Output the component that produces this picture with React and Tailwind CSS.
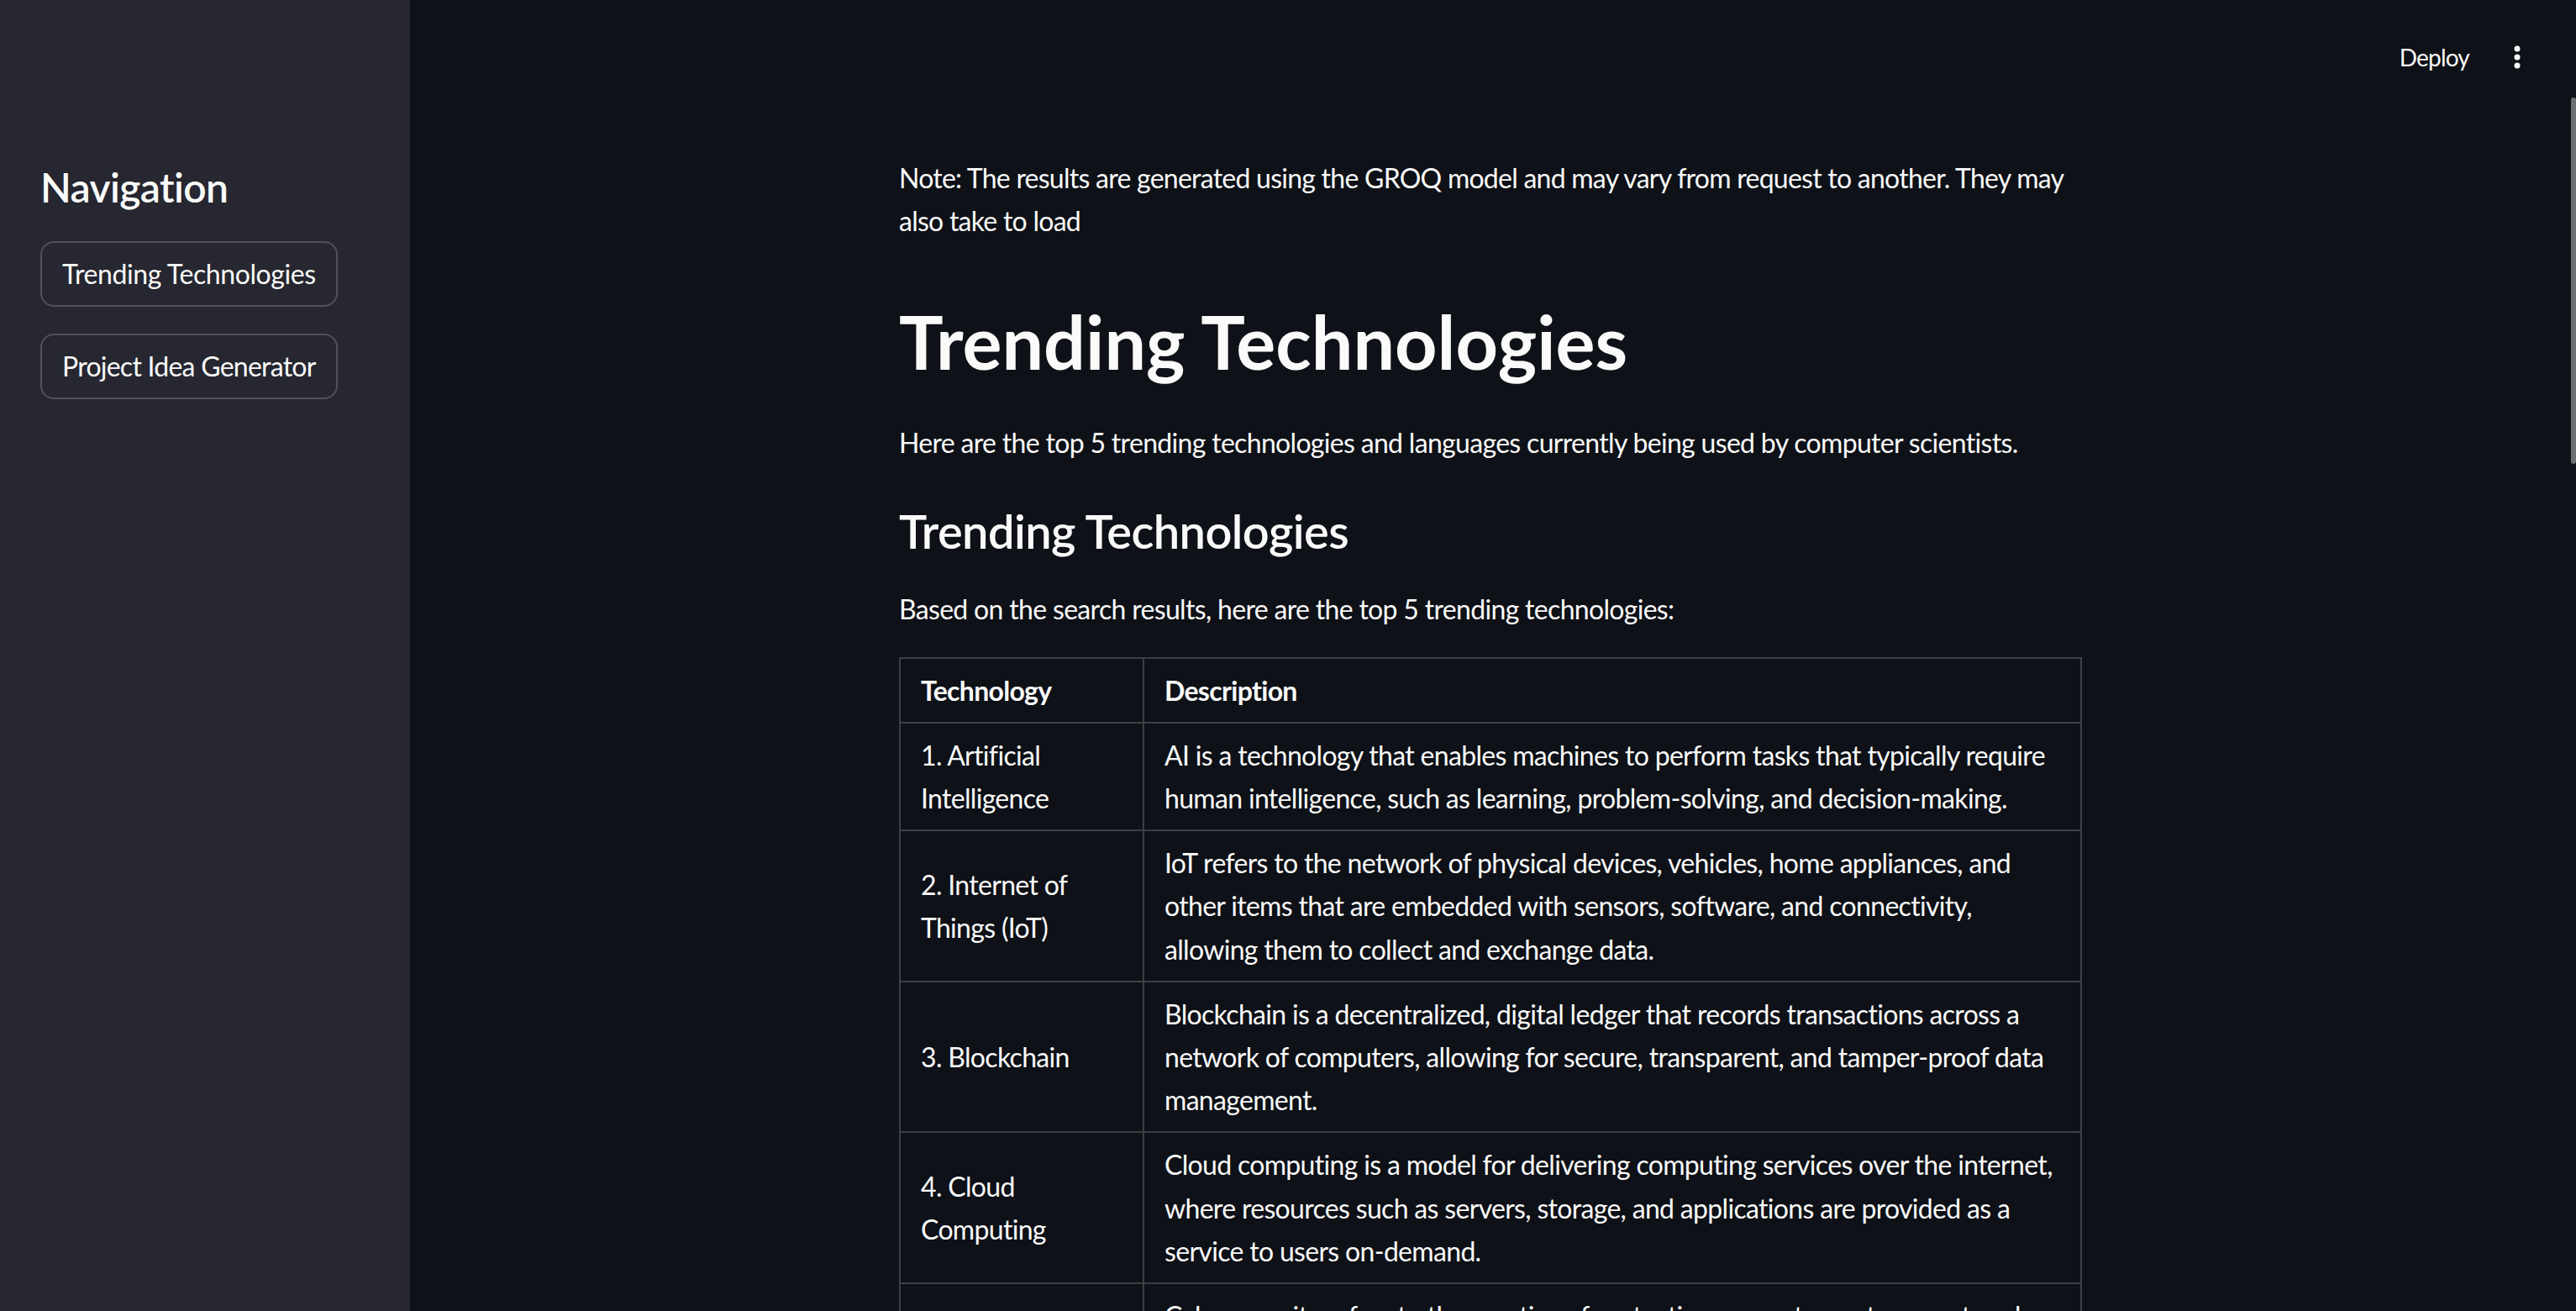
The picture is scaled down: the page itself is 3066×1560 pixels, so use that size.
import React from 'react';

const rows = [
	{
		tech: ['1. Artificial', 'Intelligence'],
		desc: [
			'AI is a technology that enables machines to perform tasks that typically require',
			'human intelligence, such as learning, problem-solving, and decision-making.',
		],
	},
	{
		tech: ['2. Internet of', 'Things (IoT)'],
		desc: [
			'IoT refers to the network of physical devices, vehicles, home appliances, and',
			'other items that are embedded with sensors, software, and connectivity,',
			'allowing them to collect and exchange data.',
		],
	},
	{
		tech: ['3. Blockchain'],
		desc: [
			'Blockchain is a decentralized, digital ledger that records transactions across a',
			'network of computers, allowing for secure, transparent, and tamper-proof data',
			'management.',
		],
	},
	{
		tech: ['4. Cloud', 'Computing'],
		desc: [
			'Cloud computing is a model for delivering computing services over the internet,',
			'where resources such as servers, storage, and applications are provided as a',
			'service to users on-demand.',
		],
	},
	{
		tech: ['5. Cybersecurity'],
		desc: [
			'Cybersecurity refers to the practice of protecting computer systems, networks,',
			'and data from unauthorized access, use, disclosure, disruption, modification,',
			'or destruction.',
		],
	},
];

const Lines = ({ lines }) =>
	lines.map((l, i) => (
		<div key={i} className="whitespace-nowrap">
			{l}
		</div>
	));

const App = () => {
	return (
		<div className="flex h-[1560px] w-full overflow-hidden bg-[#0e1117] text-[#fafafa] font-[Lato,sans-serif]">
			{/* Sidebar */}
			<aside className="w-[488px] shrink-0 bg-[#262730] px-[48px] pt-[194px]">
				<h1 className="text-[48px] leading-[57.6px] font-semibold tracking-[-0.6px]">Navigation</h1>
				<div className="mt-[35px] flex flex-col items-start gap-[32px]">
					<button className="h-[78px] rounded-[16px] border-2 border-[#50515a] bg-[#262730] px-[24px] text-[32px] leading-[51px] tracking-[-0.4px]">
						Trending Technologies
					</button>
					<button className="h-[78px] rounded-[16px] border-2 border-[#50515a] bg-[#262730] px-[24px] text-[32px] leading-[51px] tracking-[-0.75px]">
						Project Idea Generator
					</button>
				</div>
			</aside>

			{/* Main */}
			<main className="relative flex-1 flex flex-col">
				<header className="h-[120px] shrink-0 flex items-start justify-end gap-[53px] pt-[48px] pr-[66px]">
					<span className="text-[28px] leading-[40px] tracking-[-0.8px]">Deploy</span>
					<svg width="8" height="40" viewBox="0 0 8 40">
						<circle cx="4" cy="10" r="3.5" fill="#fafafa" />
						<circle cx="4" cy="20" r="3.5" fill="#fafafa" />
						<circle cx="4" cy="30" r="3.5" fill="#fafafa" />
					</svg>
				</header>

				<div className="flex justify-center pr-[6px] pt-[66px]">
					<div className="w-[1408px] text-[32px] leading-[51.2px] tracking-[-0.68px]">
						<p className="whitespace-nowrap tracking-[-0.75px]">
							Note: The results are generated using the GROQ model and may vary from request to another. They may
							<br />
							also take to load
						</p>

						<h1 className="mt-[66px] text-[88px] leading-[105.6px] font-bold tracking-[0px]">
							Trending Technologies
						</h1>

						<p className="mt-[41px] whitespace-nowrap">
							Here are the top 5 trending technologies and languages currently being used by computer scientists.
						</p>

						<h3 className="mt-[46px] text-[56px] leading-[67.2px] font-semibold tracking-[-0.6px]">
							Trending Technologies
						</h3>

						<p className="mt-[34px] whitespace-nowrap">
							Based on the search results, here are the top 5 trending technologies:
						</p>

						<table className="mt-[31px] w-[1408px] border-collapse table-fixed">
							<colgroup>
								<col className="w-[290px]" />
								<col />
							</colgroup>
							<thead>
								<tr>
									<th className="border-2 border-[#3d3f44] px-[24px] py-[12px] text-left font-bold">Technology</th>
									<th className="border-2 border-[#3d3f44] px-[24px] py-[12px] text-left font-bold">Description</th>
								</tr>
							</thead>
							<tbody>
								{rows.map((r, i) => (
									<tr key={i}>
										<td className="border-2 border-[#3d3f44] px-[24px] py-[12px] align-middle">
											<Lines lines={r.tech} />
										</td>
										<td className="border-2 border-[#3d3f44] px-[24px] py-[12px] align-middle">
											<Lines lines={r.desc} />
										</td>
									</tr>
								))}
							</tbody>
						</table>
					</div>
				</div>

				{/* scrollbar thumb */}
				<div className="absolute right-0 top-[116px] w-[6px] h-[436px] rounded-[3px] bg-[#6e6f72]" />
			</main>
		</div>
	);
};

export default App;
